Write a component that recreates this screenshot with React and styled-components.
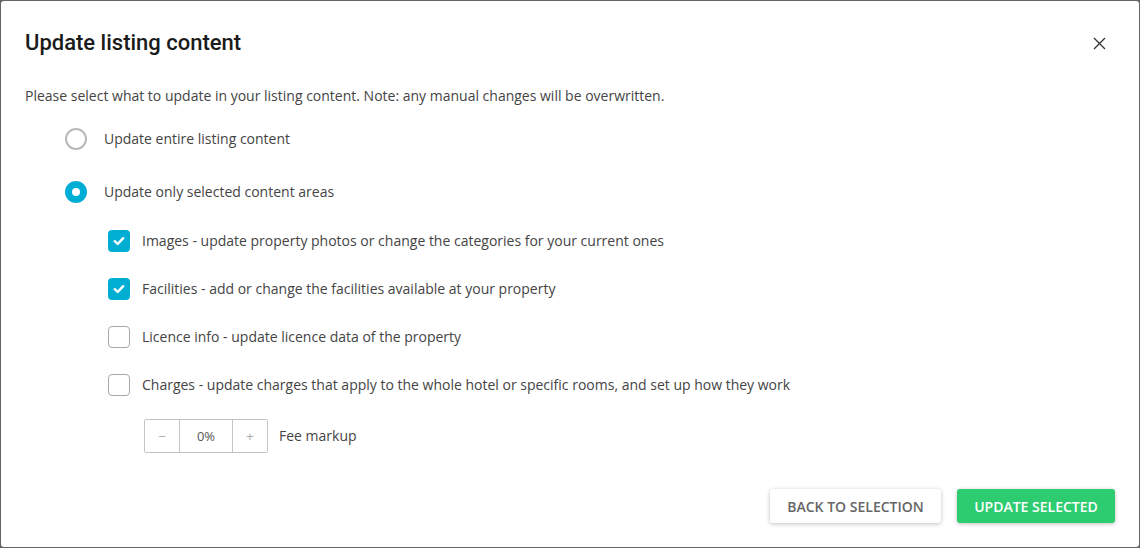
import { useState } from 'react';
import styled, { createGlobalStyle } from 'styled-components';

const GlobalStyle = createGlobalStyle`
	html, body {
		margin: 0;
		padding: 0;
		background: #646464;
	}
	body {
		font-family: 'Open Sans', 'Liberation Sans', sans-serif;
	}
`;

const AREAS = [
	{ id: 'images', label: 'Images - update property photos or change the categories for your current ones' },
	{ id: 'facilities', label: 'Facilities - add or change the facilities available at your property' },
	{ id: 'licence', label: 'Licence info - update licence data of the property' },
	{ id: 'charges', label: 'Charges - update charges that apply to the whole hotel or specific rooms, and set up how they work' },
];

const CheckIcon = () => (
	<svg width='14' height='14' viewBox='0 0 14 14'>
		<path d='M2.8 7.2 L5.7 10 L11.2 4.2' fill='none' stroke='#fff' strokeWidth='2.4' strokeLinecap='round' strokeLinejoin='round' />
	</svg>
);

const CloseIcon = () => (
	<svg width='13' height='13' viewBox='0 0 13 13'>
		<path d='M1 1 L12 12 M12 1 L1 12' stroke='#333' strokeWidth='1.3' />
	</svg>
);

export default function App() {
	const [mode, setMode] = useState('selected');
	const [checked, setChecked] = useState({ images: true, facilities: true, licence: false, charges: false });
	const [fee, setFee] = useState(0);

	const toggle = (id) => setChecked({ ...checked, [id]: !checked[id] });

	return (
		<>
			<GlobalStyle />
			<Dialog>
				<Header>
					<Title>Update listing content</Title>
					<CloseButton aria-label='Close'>
						<CloseIcon />
					</CloseButton>
				</Header>
				<Body>
					<Description>
						Please select what to update in your listing content. Note: any manual changes will be overwritten.
					</Description>
					<RadioRow onClick={() => setMode('entire')}>
						<Radio $checked={mode === 'entire'} />
						<OptionText>Update entire listing content</OptionText>
					</RadioRow>
					<RadioRow $second onClick={() => setMode('selected')}>
						<Radio $checked={mode === 'selected'} />
						<OptionText>Update only selected content areas</OptionText>
					</RadioRow>
					<Areas>
						{AREAS.map((a) => (
							<CheckRow key={a.id} onClick={() => toggle(a.id)}>
								<Checkbox $checked={checked[a.id]}>{checked[a.id] && <CheckIcon />}</Checkbox>
								<OptionText>{a.label}</OptionText>
							</CheckRow>
						))}
						<FeeRow>
							<Stepper>
								<StepButton onClick={() => setFee(Math.max(0, fee - 1))}>−</StepButton>
								<StepValue>{fee}%</StepValue>
								<StepButton onClick={() => setFee(fee + 1)}>+</StepButton>
							</Stepper>
							<OptionText>Fee markup</OptionText>
						</FeeRow>
					</Areas>
				</Body>
				<Footer>
					<SecondaryButton>Back to selection</SecondaryButton>
					<PrimaryButton>Update selected</PrimaryButton>
				</Footer>
			</Dialog>
		</>
	);
}

const Dialog = styled.div`
	margin: 1px;
	height: 546px;
	box-sizing: border-box;
	background: #fff;
	border-radius: 3px;
	display: flex;
	flex-direction: column;
`;

const Header = styled.div`
	display: flex;
	justify-content: space-between;
	align-items: center;
	padding: 28px 33px 0 24px;
`;

const Title = styled.h1`
	margin: 0;
	font-family: Roboto, 'Liberation Sans', sans-serif;
	font-weight: 500;
	font-size: 22px;
	line-height: 28px;
	color: #1b1b1b;
`;

const CloseButton = styled.button`
	border: none;
	background: none;
	padding: 0;
	display: flex;
	cursor: pointer;
`;

const Body = styled.div`
	display: flex;
	flex-direction: column;
	padding: 0 24px;
`;

const Description = styled.p`
	margin: 29px 0 0;
	font-size: 14px;
	line-height: 20px;
	color: #444;
`;

const RadioRow = styled.label`
	display: flex;
	align-items: center;
	gap: 17px;
	margin: ${(p) => (p.$second ? '31px' : '22px')} 0 0 40px;
	height: 22px;
	cursor: pointer;
`;

const Radio = styled.span`
	width: 22px;
	height: 22px;
	box-sizing: border-box;
	border-radius: 50%;
	border: ${(p) => (p.$checked ? '7px solid #00aed3' : '2px solid #b9b9b9')};
	background: #fff;
	flex-shrink: 0;
`;

const OptionText = styled.span`
	font-size: 14px;
	line-height: 20px;
	color: #444;
`;

const Areas = styled.div`
	display: flex;
	flex-direction: column;
	gap: 26px;
	margin: 27px 0 0 83px;
`;

const CheckRow = styled.label`
	display: flex;
	align-items: center;
	gap: 12px;
	height: 22px;
	cursor: pointer;
`;

const Checkbox = styled.span`
	width: 22px;
	height: 22px;
	box-sizing: border-box;
	border-radius: 4px;
	border: ${(p) => (p.$checked ? 'none' : '1px solid #a9a9a9')};
	background: ${(p) => (p.$checked ? '#00aed3' : '#fff')};
	display: flex;
	align-items: center;
	justify-content: center;
	flex-shrink: 0;
`;

const FeeRow = styled.div`
	display: flex;
	align-items: center;
	gap: 11px;
	margin: -3px 0 0 36px;
`;

const Stepper = styled.div`
	display: flex;
	height: 34px;
	border: 1px solid #c4c4c4;
	box-sizing: border-box;
	border-radius: 2px;
`;

const StepButton = styled.button`
	width: 34px;
	border: none;
	background: #fff;
	color: #aaa;
	font-family: 'Open Sans', sans-serif;
	font-size: 13px;
	padding: 0;
	cursor: pointer;
`;

const StepValue = styled.div`
	width: 52px;
	border-left: 1px solid #c4c4c4;
	border-right: 1px solid #c4c4c4;
	display: flex;
	align-items: center;
	justify-content: center;
	font-size: 13px;
	color: #555;
`;

const Footer = styled.div`
	display: flex;
	justify-content: flex-end;
	gap: 16px;
	margin-top: auto;
	padding: 0 24px 24px;
`;

const BaseButton = styled.button`
	height: 34px;
	border: none;
	border-radius: 3px;
	font-family: 'Open Sans', sans-serif;
	font-weight: 600;
	font-size: 14px;
	white-space: nowrap;
	text-transform: uppercase;
	padding: 0;
	cursor: pointer;
	box-shadow: 0 1px 4px rgba(0, 0, 0, 0.25);
`;

const SecondaryButton = styled(BaseButton)`
	background: #fff;
	color: #666;
	width: 171px;
`;

const PrimaryButton = styled(BaseButton)`
	background: #2ecc71;
	color: #fff;
	width: 158px;
`;
